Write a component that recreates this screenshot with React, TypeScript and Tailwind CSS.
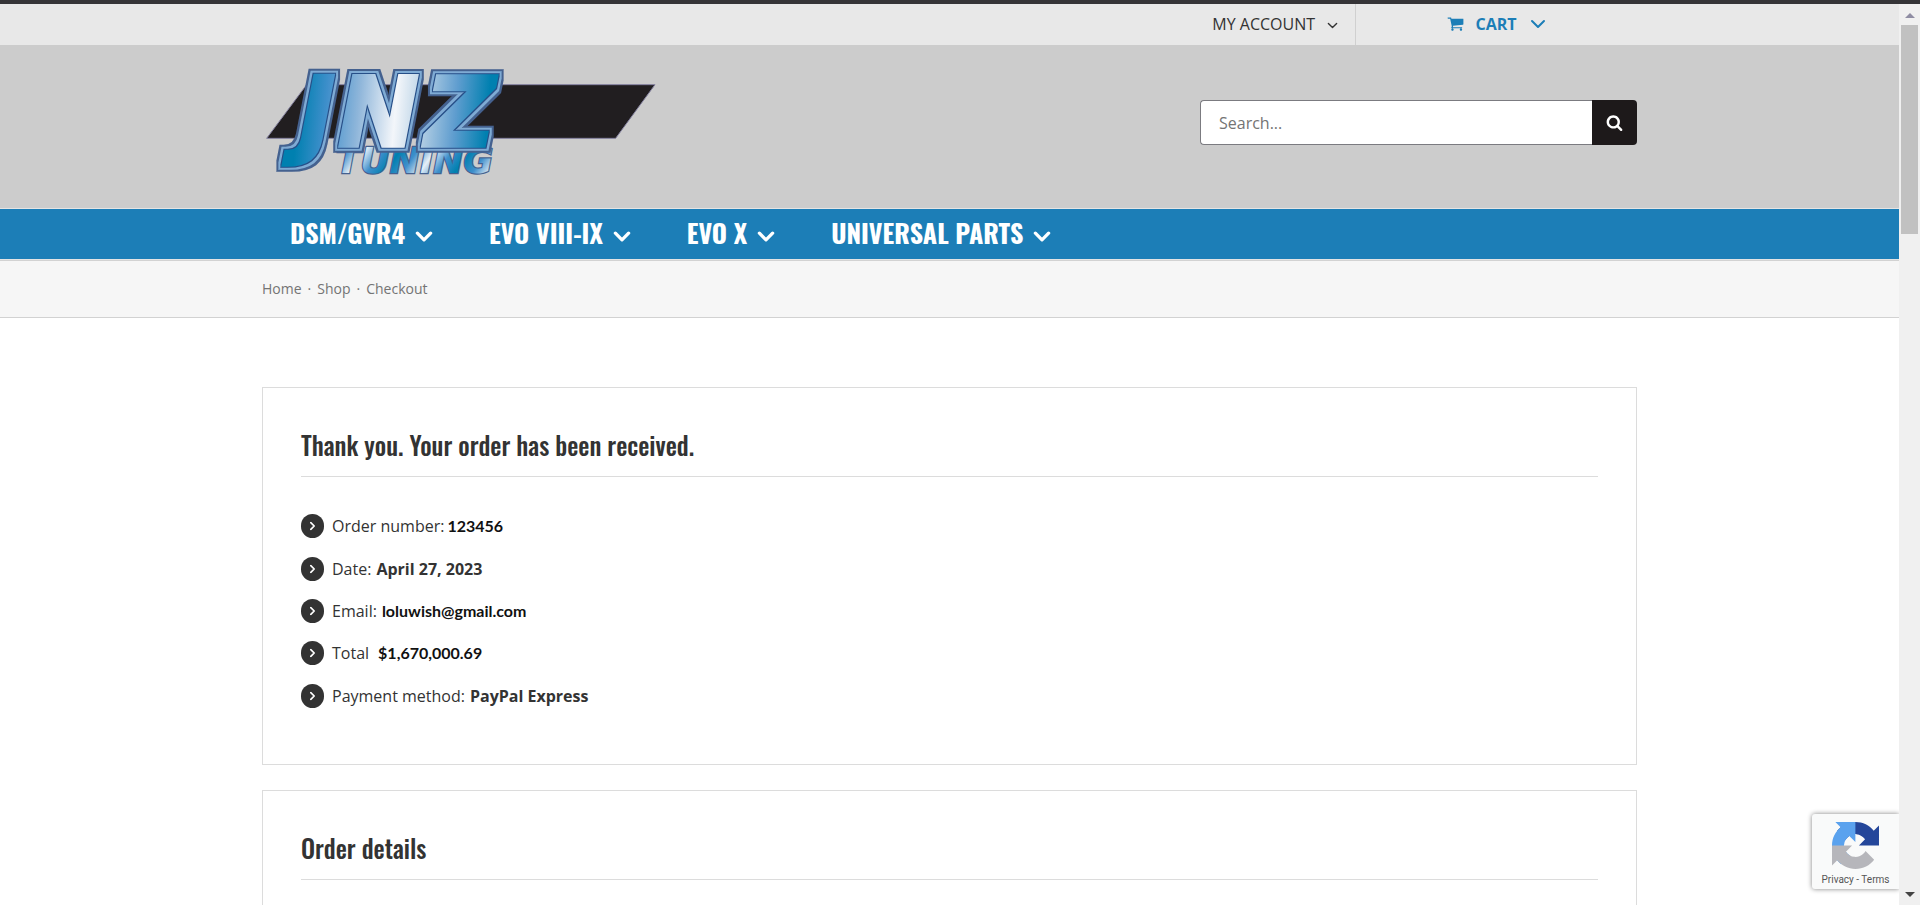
import type { ReactNode } from 'react'

const menu = ['DSM/GVR4', 'EVO VIII-IX', 'EVO X', 'UNIVERSAL PARTS']

const order = [
  { label: 'Order number:', value: '123456', className: "ml-[3px] font-['Lato'] text-[#111]" },
  { label: 'Date:', value: 'April 27, 2023', className: 'ml-[5px]' },
  { label: 'Email:', value: 'loluwish@gmail.com', className: "ml-[5px] font-['Lato'] text-[#111]" },
  { label: 'Total', value: '$1,670,000.69', className: "ml-[9px] font-['Lato'] text-[#111]" },
  { label: 'Payment method:', value: 'PayPal Express', className: 'ml-[5px]' },
]

function Chevron({ className, weight = 2 }: { className: string; weight?: number }) {
  return (
    <svg viewBox="0 0 16 10" className={className} fill="none" stroke="currentColor" strokeWidth={weight} strokeLinecap="round" strokeLinejoin="round" aria-hidden="true">
      <path d="M2 2l6 6 6-6" />
    </svg>
  )
}

function Logo() {
  return (
    <svg viewBox="36 60 1230 324" className="h-[108px] w-[410px] overflow-visible" fontFamily="DejaVu Sans, sans-serif" fontWeight="bold" fontStyle="italic" role="img" aria-label="JNZ Tuning">
      <defs>
        <linearGradient id="chrome" gradientUnits="userSpaceOnUse" x1="90" y1="0" x2="780" y2="60">
          <stop offset="0.1" stopColor="#0080b0" />
          <stop offset="0.22" stopColor="#3f8fcb" />
          <stop offset="0.36" stopColor="#8fb6da" />
          <stop offset="0.52" stopColor="#f3f6fa" />
          <stop offset="0.64" stopColor="#b4cfe4" />
          <stop offset="0.78" stopColor="#5f9dcf" />
          <stop offset="0.92" stopColor="#0080b0" />
        </linearGradient>
        <linearGradient id="shine" gradientUnits="userSpaceOnUse" x1="240" y1="300" x2="310" y2="350" spreadMethod="reflect">
          <stop offset="0" stopColor="#0080b0" />
          <stop offset="0.5" stopColor="#3f8fcb" />
          <stop offset="1" stopColor="#e6eff7" />
        </linearGradient>
        {/* navy, light blue and navy rims around the letters */}
        <filter id="rim" filterUnits="userSpaceOnUse" x="0" y="20" width="1000" height="400" colorInterpolationFilters="sRGB">
          <feMorphology in="SourceAlpha" operator="dilate" radius="4" result="a" />
          <feMorphology in="SourceAlpha" operator="dilate" radius="10" result="b" />
          <feMorphology in="SourceAlpha" operator="dilate" radius="14" result="c" />
          <feFlood floodColor="#274f88" />
          <feComposite in2="a" operator="in" result="inner" />
          <feFlood floodColor="#7fabd4" />
          <feComposite in2="b" operator="in" result="light" />
          <feFlood floodColor="#44618f" />
          <feComposite in2="c" operator="in" result="outer" />
          <feMerge>
            <feMergeNode in="outer" />
            <feMergeNode in="light" />
            <feMergeNode in="inner" />
            <feMergeNode in="SourceGraphic" />
          </feMerge>
        </filter>
      </defs>
      <path d="M50 265L170 104H1215L1097 265Z" fill="#211e20" stroke="#8582a0" strokeWidth="3" />
      <text x="258" y="368" fontSize="108" fill="url(#shine)" stroke="#44618f" strokeWidth="7" paintOrder="stroke">TUNING</text>
      <text x="148 264 526" y="287" fontSize="290" fill="url(#chrome)" stroke="url(#chrome)" strokeWidth="10" filter="url(#rim)">JNZ</text>
    </svg>
  )
}

function Card({ title, children }: { title: string; children?: ReactNode }) {
  return (
    <section className="border border-[#dcdcdc] px-[38px] pt-[37px]">
      <h2 className="border-b border-[#dcdcdc] pb-[11px] font-['Oswald',sans-serif] text-[25px] leading-[40px] font-medium text-[#333]">{title}</h2>
      {children}
    </section>
  )
}

function Recaptcha() {
  return (
    <div className="absolute right-0 bottom-4 flex h-[75px] w-[87px] flex-col items-center rounded-l-[3px] bg-[#f9fafa] pt-2 shadow-[0_0_5px_#808080]">
      <svg viewBox="0 0 64 64" className="h-[47px] w-[47px]" aria-hidden="true">
        <path fill="#24469a" d="M64 31.955l-.033-1.37V4.687l-7.16 7.16C50.948 4.674 42.033.093 32.05.093c-10.4 0-19.622 4.96-25.458 12.64l11.736 11.86a15.55 15.55 0 0 1 4.754-5.334c2.05-1.6 4.952-2.906 8.968-2.906.485 0 .86.057 1.135.163 4.976.393 9.288 3.14 11.828 7.124l-8.307 8.307L64 31.953" />
        <path fill="#5aa2ee" d="M31.862.094l-1.37.033H4.594l7.16 7.16C4.58 13.147 0 22.06 0 32.046c0 10.4 4.96 19.622 12.64 25.458L24.5 45.768a15.55 15.55 0 0 1-5.334-4.754c-1.6-2.05-2.906-4.952-2.906-8.968 0-.485.057-.86.163-1.135.393-4.976 3.14-9.288 7.124-11.828l8.307 8.307L31.86.095" />
        <path fill="#b6b6bb" d="M.001 32.045l.033 1.37v25.898l7.16-7.16c5.86 7.173 14.774 11.754 24.76 11.754 10.4 0 19.622-4.96 25.458-12.64l-11.736-11.86a15.55 15.55 0 0 1-4.754 5.334c-2.05 1.6-4.952 2.906-8.968 2.906-.485 0-.86-.057-1.135-.163-4.976-.393-9.288-3.14-11.828-7.124l8.307-8.307c-10.522.04-22.4.066-27.295-.005" />
      </svg>
      <p className="mt-1 font-['Roboto',sans-serif] text-[10px] leading-[14px] whitespace-nowrap text-[#555]">
        <a href="#privacy">Privacy</a> - <a href="#terms">Terms</a>
      </p>
    </div>
  )
}

export default function App() {
  return (
    <div className="flex h-screen flex-col overflow-hidden border-t-4 border-[#353437] bg-white font-['Open_Sans',sans-serif] text-base text-[#333]">
      <div className="flex min-h-0 flex-1">
        <div className="relative min-w-0 flex-1 overflow-hidden">
          <div className="bg-[#e8e8e8]">
            <div className="mx-auto flex h-[41px] max-w-[1375px] justify-end">
              <a href="#account" className="flex items-center gap-3 border-r border-[#d0d0d0] pr-[17px] pb-[2px]">
                MY ACCOUNT
                <Chevron className="mt-1 h-[7px] w-[11px]" />
              </a>
              <a href="#cart" className="flex w-[281px] items-center justify-center pb-[2px] font-bold text-[#1c7eb7]">
                <svg viewBox="0 0 1792 1792" className="h-[17px] w-[17px]" fill="currentColor" aria-hidden="true">
                  <path d="M704 1536q0 52-38 90t-90 38-90-38-38-90 38-90 90-38 90 38 38 90zm896 0q0 52-38 90t-90 38-90-38-38-90 38-90 90-38 90 38 38 90zm128-1088v512q0 24-16.5 42.5t-40.5 21.5l-1044 122q13 60 13 70 0 16-24 64h920q26 0 45 19t19 45-19 45-45 19h-1024q-26 0-45-19t-19-45q0-11 8-31.5t16-36 21.5-40 15.5-29.5l-177-823h-204q-26 0-45-19t-19-45 19-45 45-19h256q16 0 28.5 6.5t19.5 15.5 13 24.5 8 26 5.5 29.5 4.5 26h1201q26 0 45 19t19 45z" />
                </svg>
                <span className="ml-[11px]">CART</span>
                <Chevron className="ml-[13px] h-[10px] w-4" />
              </a>
            </div>
          </div>

          <header className="bg-[#ccc]">
            <div className="mx-auto flex h-[163px] max-w-[1375px] items-start justify-between">
              <a href="#home" className="pt-[25px]">
                <Logo />
              </a>
              <form role="search" className="mt-[55px] flex h-[45px] w-[437px]">
                <input type="search" placeholder="Search..." aria-label="Search" className="min-w-0 flex-1 rounded-l border border-r-0 border-[#7b7b80] bg-white px-[18px] placeholder:text-[#747474]" />
                <button type="submit" aria-label="Search" className="flex w-[45px] items-center justify-center rounded-r bg-[#1d191a] text-white">
                  <svg viewBox="0 0 1792 1792" className="h-[17px] w-[17px]" fill="currentColor" aria-hidden="true">
                    <path d="M1216 832q0-185-131.5-316.5t-316.5-131.5-316.5 131.5-131.5 316.5 131.5 316.5 316.5 131.5 316.5-131.5 131.5-316.5zm512 832q0 52-38 90t-90 38q-54 0-90-38l-343-342q-179 124-399 124-143 0-273.5-55.5t-225-150-150-225-55.5-273.5 55.5-273.5 150-225 225-150 273.5-55.5 273.5 55.5 225 150 150 225 55.5 273.5q0 220-124 399l343 343q37 37 37 90z" />
                  </svg>
                </button>
              </form>
            </div>
          </header>

          <nav className="border-y border-[#e4e4e4] bg-[#1c7eb7]">
            <ul className="mx-auto flex h-[50px] max-w-[1375px] gap-[56px] pl-[28px]">
              {menu.map((item) => (
                <li key={item}>
                  <a href="#shop" className="flex h-full items-center gap-[10px] pb-[4px] font-['Oswald',sans-serif] text-[26px] font-bold text-white">
                    {item}
                    <Chevron className="mt-2 h-[11px] w-[18px]" weight={3} />
                  </a>
                </li>
              ))}
            </ul>
          </nav>

          <div className="border-y border-[#d2d2d2] bg-[#f6f6f6]">
            <div className="mx-auto flex h-[56px] max-w-[1375px] items-center gap-[6px] text-sm text-[#747474]">
              <a href="#home">Home</a>
              <span>·</span>
              <a href="#shop">Shop</a>
              <span>·</span>
              <span>Checkout</span>
            </div>
          </div>

          <main className="mx-auto flex max-w-[1375px] flex-col gap-[25px] pt-[69px]">
            <Card title="Thank you. Your order has been received.">
              <ul className="mt-[28px] mb-[47px] grid h-[212px] auto-rows-fr">
                {order.map((row) => (
                  <li key={row.label} className="flex items-center">
                    <span className="mr-2 flex h-6 w-[23px] items-center justify-center rounded-full bg-[#333]">
                      <Chevron className="h-[6px] w-[9px] -rotate-90 text-white" weight={3} />
                    </span>
                    {row.label}
                    <strong className={row.className}>{row.value}</strong>
                  </li>
                ))}
              </ul>
            </Card>
            <Card title="Order details">
              <div className="h-[200px]" />
            </Card>
          </main>

          <Recaptcha />
        </div>

        <div className="flex w-[21px] flex-col items-center bg-[#f0f0f0] pt-[9px] pb-[8px]" aria-hidden="true">
          <svg viewBox="0 0 10 5" className="h-[5px] w-[10px]" fill="#8f8da3">
            <path d="M5 0l5 5H0z" />
          </svg>
          <div className="mt-[7px] h-[209px] w-[17px] bg-[#c1c1c1]" />
          <svg viewBox="0 0 10 5" className="mt-auto h-[5px] w-[10px]" fill="#444">
            <path d="M0 0h10L5 5z" />
          </svg>
        </div>
      </div>
    </div>
  )
}
